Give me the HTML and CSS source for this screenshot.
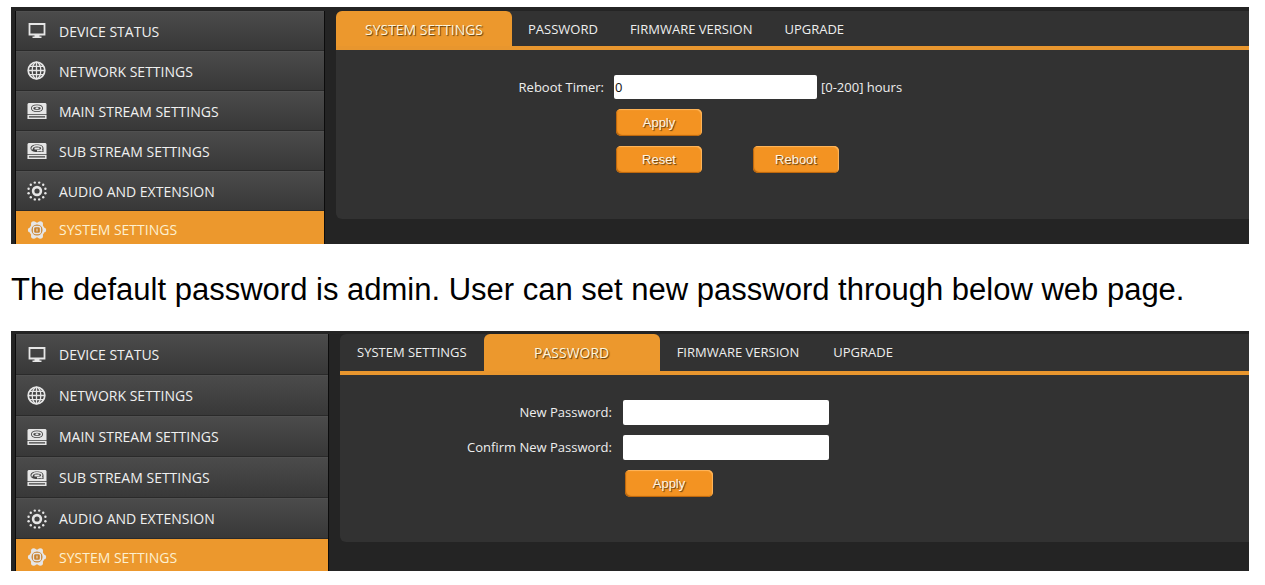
FILE: index.html
```html
<!DOCTYPE html>
<html lang="en">
<head>
<meta charset="utf-8">
<meta name="viewport" content="width=device-width, initial-scale=1">
<title>System settings</title>
<link rel="stylesheet" href="styles.css">
</head>
<body>
<svg class="sprite" aria-hidden="true">
  <symbol id="monitor" viewBox="0 0 20 20">
    <path d="M2.500 3h15v10.500h-15z" fill="none" stroke="currentColor" stroke-width="1.800"/>
    <path d="M7.500 14h5v1.500h2v1.500h-9v-1.500h2z" fill="currentColor"/>
  </symbol>
  <symbol id="globe" viewBox="0 0 20 20">
    <g fill="none" stroke="currentColor" stroke-width="1.300">
      <circle cx="9.500" cy="9.500" r="8.300" stroke-width="1.700"/>
      <ellipse cx="9.500" cy="9.500" rx="4.300" ry="8.300"/>
      <path d="M9.500 1.200v16.600M1.200 9.500h16.600M2.600 5.300h13.800M2.600 13.700h13.800"/>
    </g>
  </symbol>
  <symbol id="drive" viewBox="0 0 20 20">
    <path fill-rule="evenodd" fill="currentColor" d="M1.500 2h17l1 1v10h-19V3zM10 3.500c-4 0-6 1.500-6 3.700S6 11 10 11s6-1.600 6-3.800S14 3.500 10 3.500z"/>
    <ellipse cx="10" cy="7.200" rx="4.400" ry="2.300" fill="none" stroke="currentColor" stroke-width="1.500"/>
    <ellipse cx="10" cy="7.200" rx="1.700" ry="0.900" fill="currentColor"/>
    <path d="M1.200 14.500h17.600v2.800H1.200z" fill="none" stroke="currentColor" stroke-width="1.500"/>
  </symbol>
  <symbol id="camera" viewBox="0 0 20 20">
    <path fill-rule="evenodd" fill="currentColor" d="M1.500 2h17l1 1v10h-19V3zM10 3.500c-4 0-6.500 1.500-6.500 3.700S6 11 10 11h6.500V7.200C16.500 5 14 3.500 10 3.500z"/>
    <path d="M5 8.500C5 5.500 8 4.700 10 4.700s4.800.8 4.800 2.500-2 2.500-4.800 2.500" fill="none" stroke="currentColor" stroke-width="1.400"/>
    <path d="M7.500 6.500h5v2h-5zM13.500 9h2v1.500h-2z" fill="currentColor"/>
    <path d="M1.200 14.500h17.600v2.800H1.200z" fill="none" stroke="currentColor" stroke-width="1.500"/>
  </symbol>
  <symbol id="dots" viewBox="0 0 20 20">
    <circle cx="10" cy="10" r="3.900" fill="none" stroke="currentColor" stroke-width="2.600"/>
    <g fill="currentColor">
      <circle cx="18.400" cy="12.200" r="1.200"/><circle cx="16.200" cy="16.200" r="1.200"/><circle cx="12.200" cy="18.400" r="1.200"/>
      <circle cx="7.800" cy="18.400" r="1.200"/><circle cx="3.800" cy="16.200" r="1.200"/><circle cx="1.600" cy="12.200" r="1.200"/>
      <circle cx="1.600" cy="7.800" r="1.200"/><circle cx="3.800" cy="3.800" r="1.200"/><circle cx="7.800" cy="1.600" r="1.200"/>
      <circle cx="12.200" cy="1.600" r="1.200"/><circle cx="16.200" cy="3.800" r="1.200"/><circle cx="18.400" cy="7.800" r="1.200"/>
    </g>
  </symbol>
  <symbol id="gear" viewBox="0 0 20 20">
    <g fill="currentColor">
      <circle cx="10" cy="10" r="7.600"/>
      <circle cx="16.600" cy="10" r="2.500"/><circle cx="3.400" cy="10" r="2.500"/>
      <circle cx="13.300" cy="4" r="2.700"/><circle cx="6.700" cy="4" r="2.700"/>
      <circle cx="13.300" cy="16" r="2.700"/><circle cx="6.700" cy="16" r="2.700"/>
    </g>
    <circle cx="10" cy="10" r="5.500" fill="#c9822c"/>
    <rect x="6.500" y="6.500" width="7" height="7" rx="2" fill="none" stroke="currentColor" stroke-width="1.300"/>
    <rect x="9" y="8.500" width="2" height="3" rx="0.500" fill="currentColor" opacity="0.500"/>
  </symbol>
</svg>

<section class="console">
  <nav class="menu" aria-label="Device menu">
    <a class="menu-item" href="#"><svg class="icon"><use href="#monitor"/></svg>DEVICE STATUS</a>
    <a class="menu-item" href="#"><svg class="icon"><use href="#globe"/></svg>NETWORK SETTINGS</a>
    <a class="menu-item" href="#"><svg class="icon"><use href="#drive"/></svg>MAIN STREAM SETTINGS</a>
    <a class="menu-item" href="#"><svg class="icon"><use href="#camera"/></svg>SUB STREAM SETTINGS</a>
    <a class="menu-item" href="#"><svg class="icon"><use href="#dots"/></svg>AUDIO AND EXTENSION</a>
    <a class="menu-item current" href="#"><svg class="icon"><use href="#gear"/></svg>SYSTEM SETTINGS</a>
  </nav>
  <div class="panel">
    <nav class="tabs" aria-label="Settings pages">
      <a class="tab active" href="#">SYSTEM SETTINGS</a>
      <a class="tab" href="#">PASSWORD</a>
      <a class="tab" href="#">FIRMWARE VERSION</a>
      <a class="tab" href="#">UPGRADE</a>
    </nav>
    <form class="form">
      <label class="label" for="timer">Reboot Timer:</label>
      <div class="field"><input class="input" id="timer" type="text" value="0"><span class="hint">[0-200] hours</span></div>
      <div class="actions"><button class="button" type="button">Apply</button></div>
      <div class="actions"><button class="button" type="button">Reset</button><button class="button" type="button">Reboot</button></div>
    </form>
  </div>
</section>

<p class="note">The default password is admin. User can set new password through below web page.</p>

<section class="console roomy">
  <nav class="menu" aria-label="Device menu">
    <a class="menu-item" href="#"><svg class="icon"><use href="#monitor"/></svg>DEVICE STATUS</a>
    <a class="menu-item" href="#"><svg class="icon"><use href="#globe"/></svg>NETWORK SETTINGS</a>
    <a class="menu-item" href="#"><svg class="icon"><use href="#drive"/></svg>MAIN STREAM SETTINGS</a>
    <a class="menu-item" href="#"><svg class="icon"><use href="#camera"/></svg>SUB STREAM SETTINGS</a>
    <a class="menu-item" href="#"><svg class="icon"><use href="#dots"/></svg>AUDIO AND EXTENSION</a>
    <a class="menu-item current" href="#"><svg class="icon"><use href="#gear"/></svg>SYSTEM SETTINGS</a>
  </nav>
  <div class="panel">
    <nav class="tabs" aria-label="Settings pages">
      <a class="tab" href="#">SYSTEM SETTINGS</a>
      <a class="tab active" href="#">PASSWORD</a>
      <a class="tab" href="#">FIRMWARE VERSION</a>
      <a class="tab" href="#">UPGRADE</a>
    </nav>
    <form class="form">
      <label class="label" for="new-password">New Password:</label>
      <div class="field"><input class="input" id="new-password" type="password"></div>
      <label class="label" for="confirm-password">Confirm New Password:</label>
      <div class="field"><input class="input" id="confirm-password" type="password"></div>
      <div class="actions"><button class="button" type="button">Apply</button></div>
    </form>
  </div>
</section>
</body>
</html>
```
FILE: styles.css
```css
* { box-sizing: border-box; }

body {
  margin: 0;
  padding: 7px 16px 14px 11px;
  background: #fff;
  font-family: "Open Sans", "Noto Sans", sans-serif;
  font-size: 13px;
}

.sprite { display: none; }

.console {
  --menu-width: 310px;
  --row: 40px;
  --label-width: 268px;
  --input-width: 203px;
  --input-height: 24px;
  --tabs-height: 39px;
  --tab-padding: 16px;
  --button-width: 86px;
  display: flex;
  gap: 11px;
  padding: 4px 0 0 4px;
  background: #242424;
  color: #eee;
}

.console.roomy {
  --menu-width: 314px;
  --row: 41px;
  --label-width: 272px;
  --input-width: 206px;
  --input-height: 25px;
  --tabs-height: 41px;
  --tab-padding: 17px;
  --button-width: 88px;
  padding-top: 3px;
}

.menu {
  flex: none;
  width: var(--menu-width);
  border: solid #0c0c0c;
  border-width: 0 1px;
}

.menu-item {
  display: flex;
  align-items: center;
  gap: 12px;
  height: var(--row);
  padding-left: 11px;
  border-top: 1px solid #505050;
  border-bottom: 1px solid #2a2a2a;
  background: linear-gradient(#4b4b4b, #383838);
  color: #f0f0f0;
  font-size: 14px;
  text-decoration: none;
}

.menu-item.current {
  height: 33px;
  padding-top: 4px;
  border: 0;
  background: #ec982d;
  color: #fdf0d0;
}

.roomy .menu-item.current { height: 32px; }

.icon {
  flex: none;
  width: 20px;
  height: 20px;
  color: #e6e6e6;
}

.panel {
  flex: 1;
  min-width: 0;
  margin-bottom: 25px;
  border-radius: 6px 0 0 6px;
  background: #323232;
}

.roomy .panel { margin-bottom: 29px; }

.tabs {
  display: flex;
  height: var(--tabs-height);
  border-bottom: 4px solid #e8962e;
}

.tab {
  padding: 0 var(--tab-padding);
  color: #eee;
  line-height: 37px;
  text-decoration: none;
  white-space: nowrap;
}

.tab.active {
  min-width: 176px;
  border-radius: 6px 6px 0 0;
  background: #ec982d;
  color: #fff6dc;
  font-size: 14px;
  text-align: center;
  text-shadow: 1px 1px 1px #5a3a10;
}

.form {
  display: grid;
  grid-template-columns: var(--label-width) 1fr;
  gap: 10px;
  padding-top: 25px;
}

.roomy .form { column-gap: 11px; }

.label,
.hint {
  font-weight: 500;
  line-height: 24px;
}

.label { text-align: right; }

.field {
  display: flex;
  align-items: center;
  gap: 4px;
}

.input {
  width: var(--input-width);
  height: var(--input-height);
  padding: 0 1px;
  border: 0;
  border-radius: 2px;
  background: #fff;
  color: #111;
  font: 13px "Open Sans", "Noto Sans", sans-serif;
}

.actions {
  display: flex;
  grid-column: 2;
  gap: 51px;
  padding-left: 2px;
}

.button {
  width: var(--button-width);
  height: 27px;
  padding: 0;
  border: 0;
  border-radius: 5px;
  background: #f39322;
  box-shadow: inset -1px 1px 1px #ffb75e, inset 1px -1px 1px #b8640c;
  color: #fff6e4;
  font: 13px "Liberation Sans", Arial, sans-serif;
  text-shadow: 1px 1px 1px #5a3a10;
}

.note {
  margin: 0;
  padding: 26px 0 21px;
  color: #000;
  font-family: "Liberation Sans", Arial, sans-serif;
  font-size: 31px;
  line-height: 40px;
}
```
